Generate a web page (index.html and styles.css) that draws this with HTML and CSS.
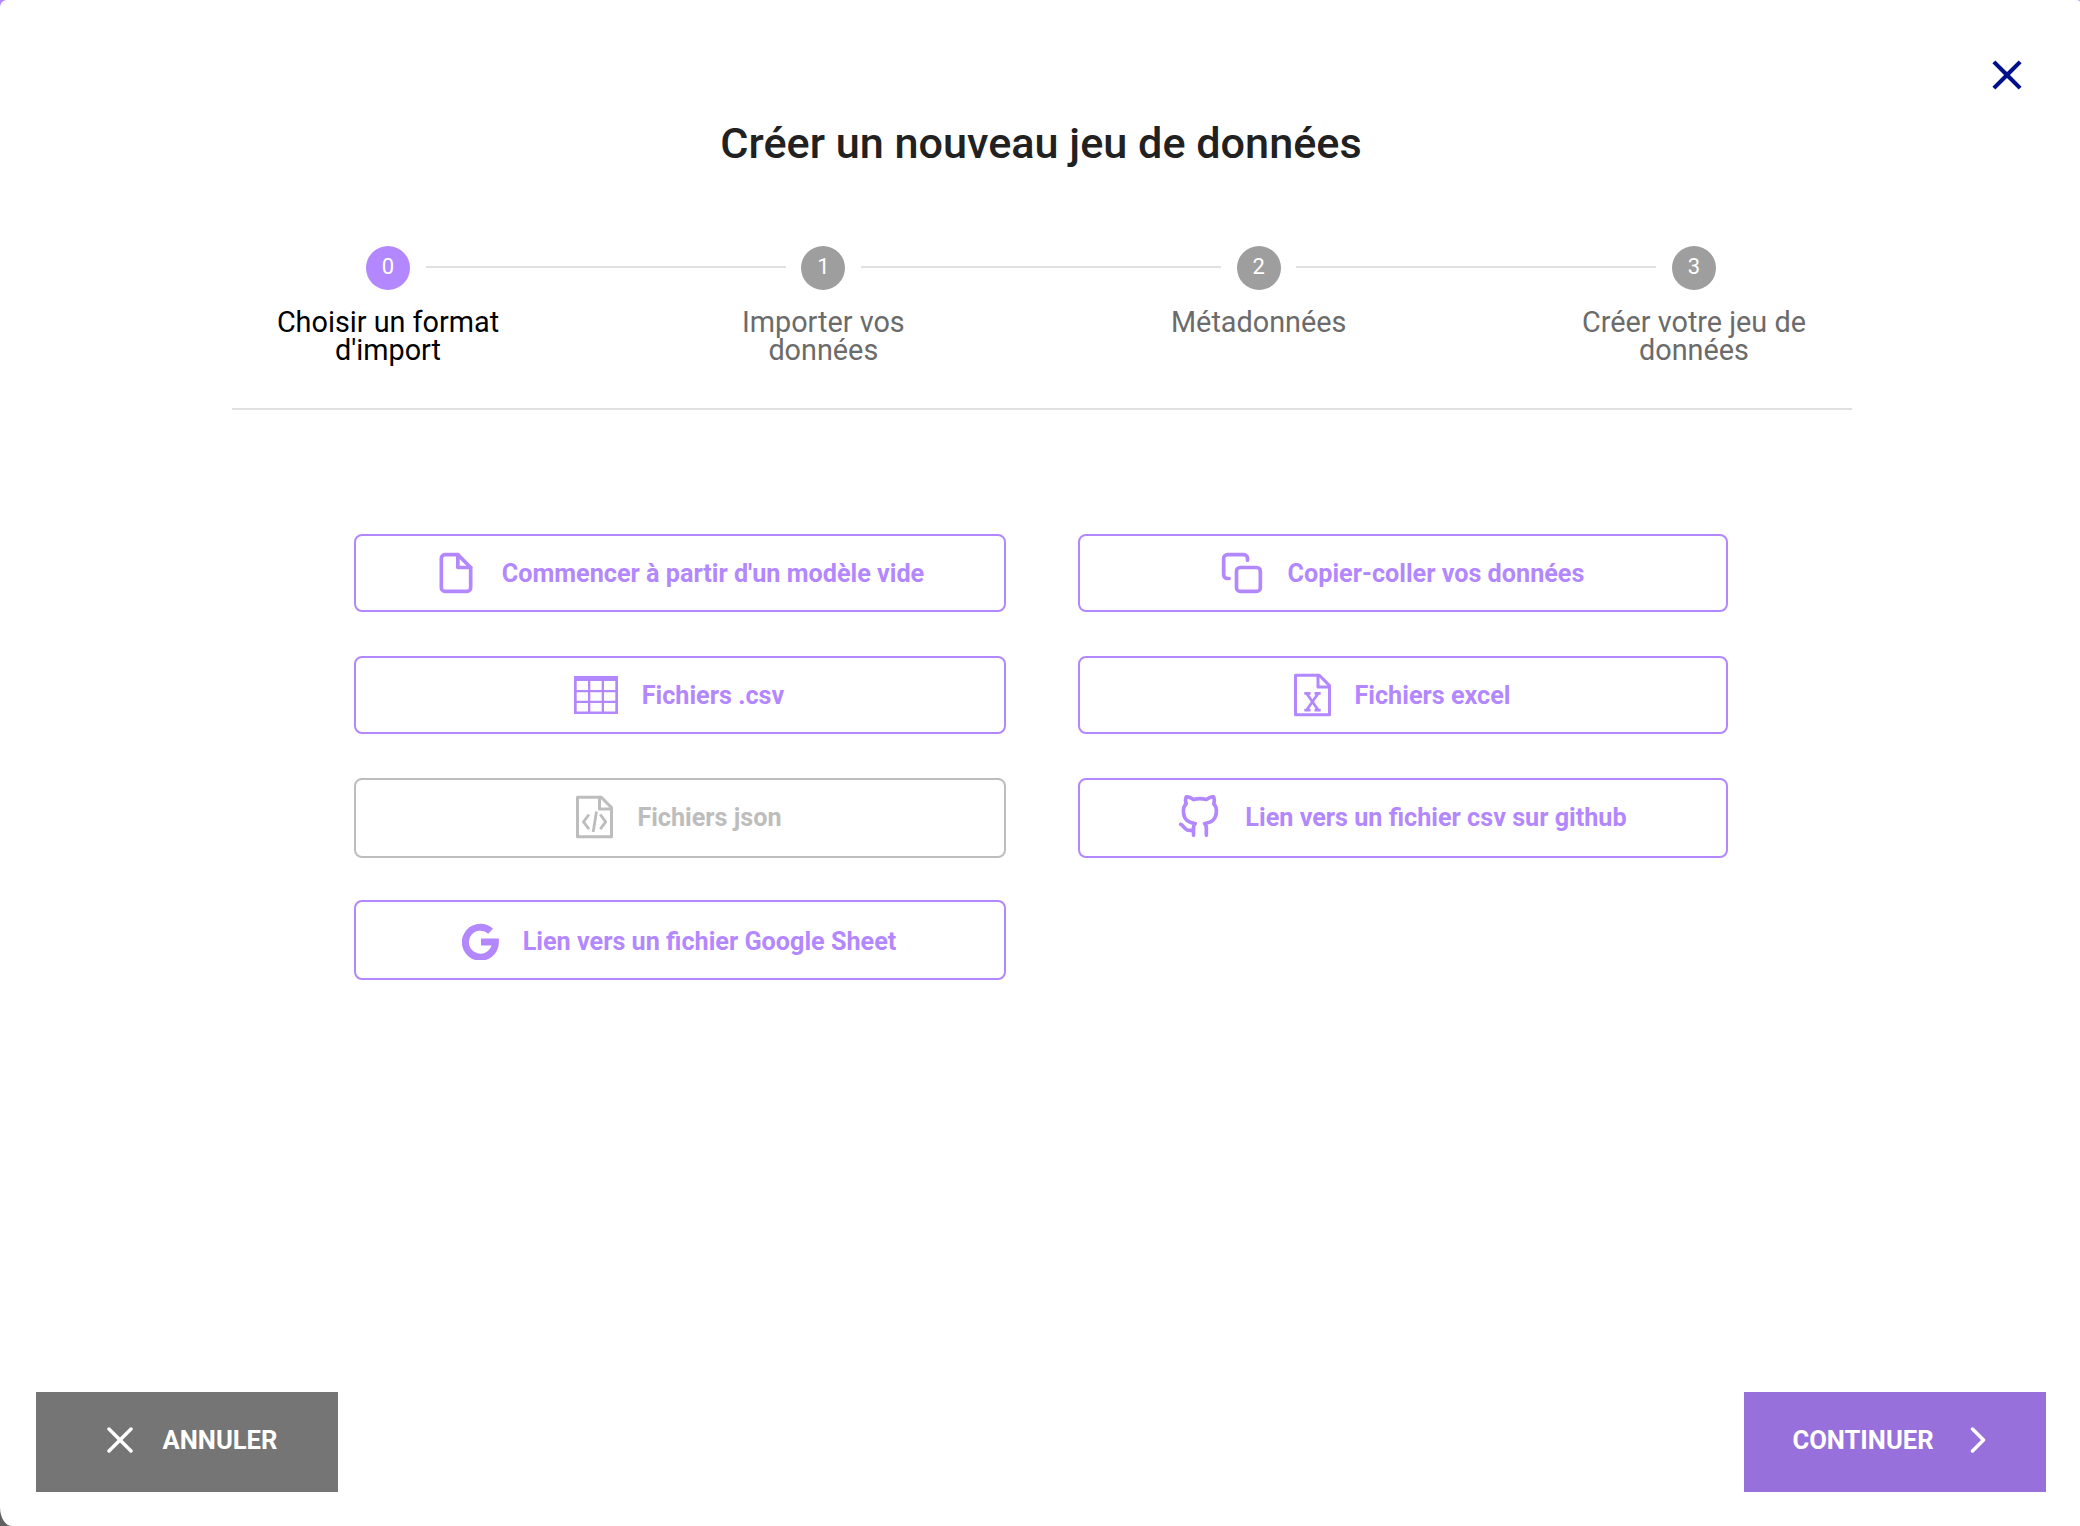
FILE: index.html
```html
<!DOCTYPE html>
<html lang="fr">
<head>
<meta charset="utf-8">
<title>Créer un nouveau jeu de données</title>
<link rel="stylesheet" href="styles.css">
</head>
<body>
<main class="dialog">
  <div class="dialog-top">
    <button class="close" aria-label="Fermer">
      <svg viewBox="0 0 24 24" width="50" height="50" fill="currentColor"><path d="M19 6.41 17.59 5 12 10.59 6.41 5 5 6.41 10.59 12 5 17.59 6.41 19 12 13.41 17.59 19 19 17.59 13.41 12z"/></svg>
    </button>
  </div>
  <h1 class="title">Créer un nouveau jeu de données</h1>

  <ol class="stepper">
    <li class="step active"><span class="num">0</span><span class="label">Choisir un format<br>d'import</span></li>
    <li class="line"></li>
    <li class="step"><span class="num">1</span><span class="label">Importer vos<br>données</span></li>
    <li class="line"></li>
    <li class="step"><span class="num">2</span><span class="label">Métadonnées</span></li>
    <li class="line"></li>
    <li class="step"><span class="num">3</span><span class="label">Créer votre jeu de<br>données</span></li>
  </ol>
  <hr class="rule">

  <section class="formats">
    <button class="format">
      <svg class="stroke" viewBox="0 0 24 24" width="44" height="44"><path d="M13 2H6a2 2 0 0 0-2 2v16a2 2 0 0 0 2 2h12a2 2 0 0 0 2-2V9z"/><path d="M13 2v7h7"/></svg>
      <span>Commencer à partir d'un modèle vide</span>
    </button>
    <button class="format">
      <svg class="stroke" viewBox="0 0 24 24" width="44" height="44"><rect x="9" y="9" width="13" height="13" rx="2"/><path d="M5 15H4a2 2 0 0 1-2-2V4a2 2 0 0 1 2-2h9a2 2 0 0 1 2 2v1"/></svg>
      <span>Copier-coller vos données</span>
    </button>
    <button class="format">
      <svg viewBox="0 0 44 38" width="44" height="38" fill="currentColor"><path fill-rule="evenodd" d="M0 0h44v38H0zM2.700 5v9H14V5zM16.300 5v9h11.400V5zM30 5v9h11.300V5zM2.700 16.200v8.600H14v-8.600zM16.300 16.200v8.600h11.400v-8.600zM30 16.200v8.600h11.300v-8.600zM2.700 27v8.500H14V27zM16.300 27v8.500h11.400V27zM30 27v8.500h11.300V27z"/></svg>
      <span>Fichiers .csv</span>
    </button>
    <button class="format">
      <svg class="sheet" viewBox="0 0 37 44" width="37" height="44"><path d="M1.500 2.200h23.800l10.200 10.400v29.200h-34z"/><path d="M24 2.200v11.900h11.500"/><path class="thin" d="M10.300 20.300h6.200M20.500 20.300h6.200M10.300 37.200h6.200M20.500 37.200h6.200M12.500 20.300l11.800 16.900M24.300 20.300L12.500 37.200"/></svg>
      <span>Fichiers excel</span>
    </button>
    <button class="format tall raised disabled" disabled>
      <svg class="sheet" viewBox="0 0 37 44" width="37" height="44"><path d="M1.500 2.200h23.800l10.200 10.400v29.200h-34z"/><path d="M23.500 2.200v11.900h12"/><path class="thin" d="M13 19.500l-5.500 7.300 5.500 7.300M24.200 19.500l5.500 7.300-5.500 7.300M20.500 16.500l-3.300 20.500"/></svg>
      <span>Fichiers json</span>
    </button>
    <button class="format tall raised">
      <svg class="stroke" viewBox="0 0 24 24" width="44" height="44"><path d="M9 19c-5 1.500-5-2.500-7-3m14 6v-3.870a3.370 3.370 0 0 0-.94-2.610c3.140-.35 6.440-1.540 6.440-7A5.440 5.440 0 0 0 20 4.770 5.070 5.070 0 0 0 19.910 1S18.730.65 16 2.480a13.380 13.380 0 0 0-7 0C6.270.65 5.090 1 5.090 1A5.070 5.070 0 0 0 5 4.770a5.440 5.440 0 0 0-1.500 3.780c0 5.420 3.300 6.610 6.440 7A3.370 3.370 0 0 0 9 18.130V22"/></svg>
      <span>Lien vers un fichier csv sur github</span>
    </button>
    <button class="format tall lowered">
      <svg viewBox="0 0 37 37" width="37" height="37" fill="none" stroke="currentColor" stroke-width="7"><path d="M28.600 8.200A15 15 0 1 0 33.400 19H19"/></svg>
      <span>Lien vers un fichier Google Sheet</span>
    </button>
  </section>

  <footer class="actions">
    <button class="action cancel">
      <svg viewBox="0 0 26 26" width="26" height="26"><path d="M2 2l22 22M24 2L2 24"/></svg>
      <span>ANNULER</span>
    </button>
    <button class="action next">
      <span>CONTINUER</span>
      <svg viewBox="0 0 16 26" width="16" height="26"><path d="M2.500 2l11 11-11 11"/></svg>
    </button>
  </footer>
</main>
</body>
</html>
```
FILE: styles.css
```css
* { box-sizing: border-box; }

body {
  margin: 0;
  background: linear-gradient(#b388ff 50%, #606060 50%);
  font-family: Roboto, "Liberation Sans", sans-serif;
}

button {
  border: 0;
  padding: 0;
  background: none;
  font: inherit;
}

svg { display: block; flex: none; }

.dialog {
  display: flex;
  flex-direction: column;
  width: 2080px;
  height: 1526px;
  background: #fff;
  border-radius: 7px 4px 0 12px / 7px 2px 0 19px;
}

.dialog-top {
  display: flex;
  justify-content: flex-end;
  padding: 50px 48.5px 0 0;
}

.close { color: #00108b; }

.title {
  margin: 14px 0 0;
  padding-left: 2px;
  height: 60px;
  line-height: 60px;
  text-align: center;
  font-size: 43.2px;
  font-weight: 500;
  color: #212121;
}

.stepper {
  display: flex;
  width: 1656px;
  height: 162px;
  margin: 72px 0 0 213px;
  padding: 0;
  list-style: none;
}

.step {
  display: flex;
  flex-direction: column;
  align-items: center;
  width: 350px;
  color: #6b6b6b;
}

.step.active { color: #000; }

.num {
  width: 44px;
  height: 44px;
  margin-bottom: 18px;
  border-radius: 50%;
  background: #9e9e9e;
  color: #fff;
  font-size: 22px;
  line-height: 42px;
  text-align: center;
}

.active .num { background: #b388ff; }

.label {
  font-size: 28.8px;
  line-height: 28px;
  text-align: center;
}

.line {
  flex: 1;
  height: 2px;
  margin: 20px -137.5px 0;
  background: #e0e0e0;
}

.rule {
  width: 1620px;
  height: 2px;
  margin: 0 0 0 232px;
  border: 0;
  background: #e0e0e0;
}

.formats {
  display: grid;
  grid-template-columns: 652px 650px;
  grid-auto-rows: 80px;
  gap: 42px 72px;
  margin: 124px 0 0 354px;
}

.format {
  display: flex;
  align-items: center;
  justify-content: center;
  gap: 24px;
  height: 78px;
  padding-right: 2px;
  border: 2px solid #b388ff;
  border-radius: 8px;
  color: #b388ff;
  font-size: 25.2px;
  font-weight: 700;
}

.tall { height: 80px; }
.raised { padding-bottom: 2px; }
.lowered { padding-top: 2px; }

.disabled {
  border-color: #bdbdbd;
  color: #bdbdbd;
}

.stroke {
  fill: none;
  stroke: currentColor;
  stroke-width: 2;
  stroke-linecap: round;
  stroke-linejoin: round;
}

.sheet {
  fill: none;
  stroke: currentColor;
  stroke-width: 3;
  stroke-linejoin: round;
}

.thin { stroke-width: 2.8; }

.actions {
  display: flex;
  justify-content: space-between;
  margin: auto 34px 34px 36px;
}

.action {
  display: flex;
  align-items: center;
  justify-content: center;
  width: 302px;
  height: 100px;
  padding-bottom: 4px;
  color: #fff;
  font-size: 25.6px;
  font-weight: 700;
}

.action svg {
  fill: none;
  stroke: currentColor;
  stroke-width: 3.5;
  stroke-linecap: round;
  stroke-linejoin: round;
}

.cancel {
  gap: 30px;
  padding-left: 10px;
  background: #757575;
}

.next {
  gap: 36px;
  padding-right: 12px;
  background: #9770db;
}
```
